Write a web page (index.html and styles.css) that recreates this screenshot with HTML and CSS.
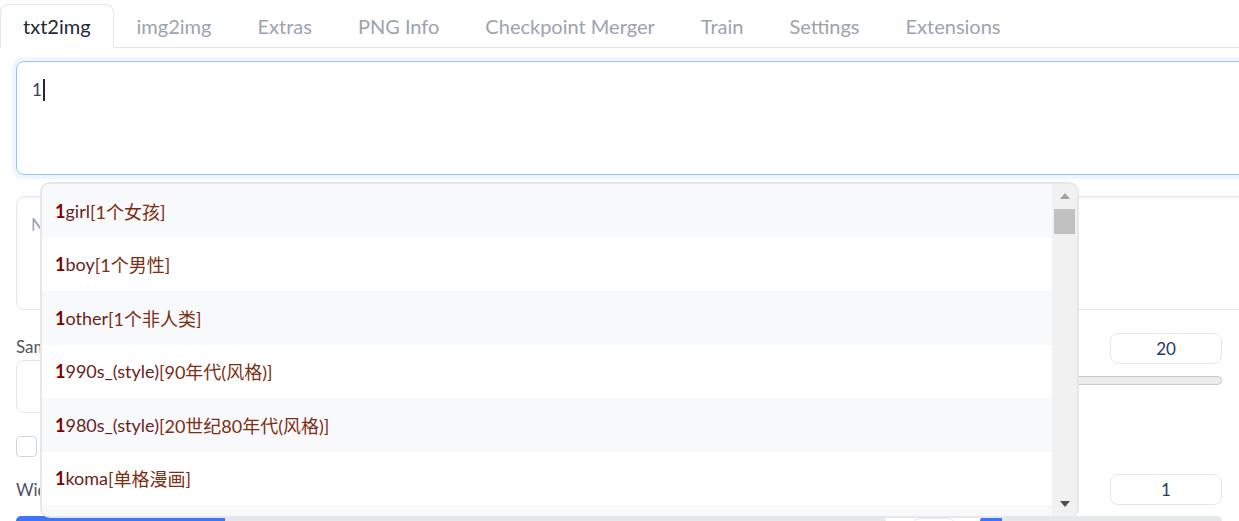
FILE: index.html
```html
<!DOCTYPE html>
<html lang="en">
<head>
<meta charset="utf-8">
<title>txt2img</title>
<link rel="stylesheet" href="styles.css">
</head>
<body>
<div class="app">
  <div class="tabs">
    <div class="tab selected">txt2img</div>
    <div class="tab">img2img</div>
    <div class="tab">Extras</div>
    <div class="tab">PNG Info</div>
    <div class="tab">Checkpoint Merger</div>
    <div class="tab">Train</div>
    <div class="tab">Settings</div>
    <div class="tab">Extensions</div>
  </div>

  <div class="panel">
    <div class="prompt"><span class="typed">1</span><span class="caret"></span></div>
    <div class="neg"><span class="placeholder">Negative prompt (press Ctrl+Enter or Alt+Enter to generate)</span></div>

    <div class="settings-row">
      <div class="col-left">
        <div class="label">Sampling method</div>
        <div class="select"><span class="select-value">Euler a</span></div>
      </div>
      <div class="col-right">
        <div class="slider-head">
          <div class="label">Sampling steps</div>
          <div class="num">20</div>
        </div>
        <div class="track"><div class="fill fill-steps"></div></div>
      </div>
    </div>

    <div class="checks">
      <span class="checkbox"></span><span class="check-label">Restore faces</span>
    </div>

    <div class="size-row">
      <div class="col-size">
        <div class="slider-head">
          <div class="label">Width</div>
          <div class="num">512</div>
        </div>
        <div class="track track-blue"><div class="fill" style="width:24%"></div></div>
      </div>
      <div class="swap"></div>
      <div class="col-batch">
        <div class="slider-head">
          <div class="label">Batch count</div>
          <div class="num">1</div>
        </div>
        <div class="track track-blue"><div class="fill" style="width:9%"></div></div>
      </div>
    </div>
  </div>

  <div class="dropdown">
    <ul class="items">
      <li class="item"><b class="hit">1</b><span class="rest">girl</span><span class="tr">[1个女孩]</span></li>
      <li class="item"><b class="hit">1</b><span class="rest">boy</span><span class="tr">[1个男性]</span></li>
      <li class="item"><b class="hit">1</b><span class="rest">other</span><span class="tr">[1个非人类]</span></li>
      <li class="item"><b class="hit">1</b><span class="rest">990s_(style)</span><span class="tr">[90年代(风格)]</span></li>
      <li class="item"><b class="hit">1</b><span class="rest">980s_(style)</span><span class="tr">[20世纪80年代(风格)]</span></li>
      <li class="item"><b class="hit">1</b><span class="rest">koma</span><span class="tr">[单格漫画]</span></li>
      <li class="item"><b class="hit">1</b><span class="rest">0s</span><span class="tr">[10多岁]</span></li>
    </ul>
    <div class="scrollbar">
      <span class="arrow-up"></span>
      <span class="thumb"></span>
      <span class="arrow-down"></span>
    </div>
  </div>
</div>
</body>
</html>
```
FILE: styles.css
```css
html, body {
  margin: 0;
  padding: 0;
  background: #ffffff;
  overflow: hidden;
}
body {
  font-family: "Lato", "Noto Sans CJK SC", sans-serif;
  color: #1f2937;
}
.app {
  position: relative;
  width: 1400px;
  height: 521px;
  overflow: hidden;
}

/* tabs */
.tabs {
  display: flex;
  border-bottom: 1px solid #e5e7eb;
  padding-top: 4px;
  box-sizing: border-box;
  height: 48px;
}
.tab {
  padding: 0 22px;
  font-size: 20px;
  line-height: 43px;
  color: #9ca3af;
  border: 1px solid transparent;
  border-bottom: none;
  white-space: nowrap;
}
.tab.selected {
  color: #1f2937;
  border-color: #e5e7eb;
  border-radius: 8px 8px 0 0;
  background: #fff;
  margin-bottom: -1px;
  height: 44px;
  box-sizing: border-box;
}

/* panel */
.panel {
  padding: 13px 0 0 16px;
  width: 1300px;
}
.prompt {
  height: 114px;
  box-sizing: border-box;
  border: 1px solid #93c5fd;
  border-radius: 8px;
  box-shadow: 0 0 0 4px #eff6ff;
  padding: 17px 15px;
  font-size: 17px;
  line-height: 22px;
  display: flex;
  align-items: flex-start;
}
.typed { color: #374151; }
.caret {
  display: inline-block;
  width: 2px;
  height: 22px;
  background: #1f2937;
  margin-left: 1px;
}
.neg {
  margin-top: 21px;
  height: 114px;
  box-sizing: border-box;
  border: 1px solid #e5e7eb;
  border-radius: 8px;
  box-shadow: inset 0 4px 6px -4px rgba(0,0,0,0.08);
  padding: 17px 14px;
  font-size: 17px;
  line-height: 22px;
}
.placeholder { color: #9ca3af; }

.label {
  font-size: 17px;
  color: #4b5563;
  line-height: 22px;
}

.settings-row {
  width: 1206px;
  display: flex;
  gap: 24px;
  margin-top: 23px;
}
.col-left { flex: 1; }
.col-left .label { margin-top: 3px; }
.select {
  margin-top: 2px;
  height: 53px;
  box-sizing: border-box;
  border: 1px solid #e5e7eb;
  border-radius: 8px;
  padding-left: 40px;
  font-size: 17px;
  line-height: 51px;
  color: #1f2937;
}
.col-right { flex: 1; }
.slider-head {
  display: flex;
  justify-content: space-between;
  align-items: center;
}
.num {
  width: 112px;
  height: 31px;
  box-sizing: border-box;
  border: 1px solid #e5e7eb;
  border-radius: 8px;
  text-align: center;
  font-size: 17px;
  line-height: 29px;
  color: #1e3a5f;
}
.track {
  margin-top: 12px;
  height: 9px;
  box-sizing: border-box;
  border: 1px solid #c9c9c9;
  border-radius: 5px;
  background: #ececec;
  overflow: hidden;
}
.fill {
  height: 100%;
  background: #3b76f6;
}
.fill-steps { width: 10%; }

.checks {
  margin-top: 23px;
  display: flex;
  align-items: center;
  height: 21px;
}
.checkbox {
  width: 21px;
  height: 21px;
  box-sizing: border-box;
  border: 1px solid #d1d5db;
  border-radius: 4px;
  background: #fff;
}
.check-label {
  margin-left: 8px;
  font-size: 17px;
  color: #374151;
}

.size-row {
  width: 1206px;
  display: flex;
  margin-top: 17px;
  align-items: flex-start;
}
.col-size { width: 870px; }
.swap {
  width: 44px;
  height: 60px;
  margin: 44px 24px 0 26px;
  border: 1px solid #e5e7eb;
  border-radius: 8px;
  box-sizing: border-box;
}
.col-batch { flex: 1; }
.track-blue {
  height: 10px;
  border: none;
  background: #e5e7eb;
  margin-top: 11px;
}

/* autocomplete dropdown (overlay) */
.dropdown {
  position: absolute;
  left: 40px;
  top: 182px;
  width: 1039px;
  height: 336px;
  box-sizing: border-box;
  border: 2px solid #e5e7eb;
  border-radius: 10px;
  background: #fff;
  display: flex;
  overflow: hidden;
  z-index: 5;
}
.items {
  list-style: none;
  margin: 0;
  padding: 0;
  flex: 1;
  overflow: hidden;
}
.item {
  height: 53.5px;
  display: flex;
  align-items: center;
  padding-left: 13px;
  font-size: 18px;
  white-space: nowrap;
}
.item:nth-child(odd) { background: #f8f9fb; }
.hit { color: #7a0000; font-weight: 700; }
.rest { color: #6b1d1d; }
.tr { color: #7c2d12; }

.scrollbar {
  width: 25px;
  background: #f1f1f1;
  display: flex;
  flex-direction: column;
  align-items: center;
}
.arrow-up {
  margin-top: 9px;
  width: 0;
  height: 0;
  border-left: 5.5px solid transparent;
  border-right: 5.5px solid transparent;
  border-bottom: 6px solid #a3a3a3;
}
.thumb {
  margin-top: 10px;
  width: 21px;
  height: 25px;
  background: #c1c1c1;
}
.arrow-down {
  margin-top: auto;
  margin-bottom: 9px;
  width: 0;
  height: 0;
  border-left: 5.5px solid transparent;
  border-right: 5.5px solid transparent;
  border-top: 6px solid #505050;
}
```
